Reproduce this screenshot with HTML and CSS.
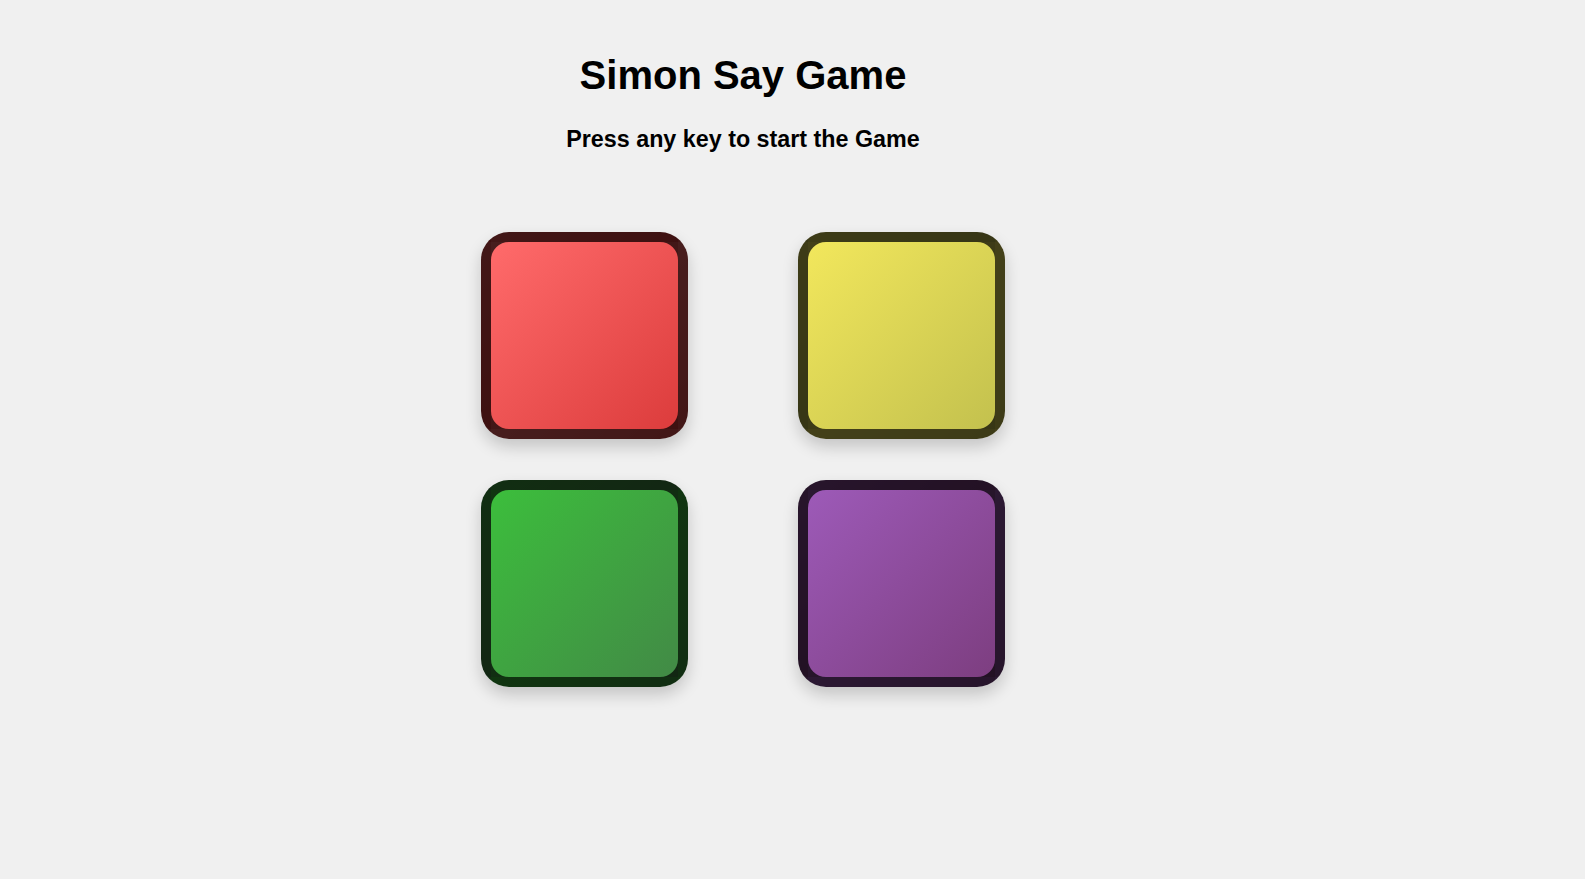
FILE: index.html
```html
<!DOCTYPE html>
<html lang="en">
<head>
<meta charset="UTF-8">
<title>Simon Say Game</title>
<link rel="stylesheet" href="styles.css">
</head>
<body>
<main class="game">
  <h1 class="title">Simon Say Game</h1>
  <h2 class="status">Press any key to start the Game</h2>
  <div class="board">
    <div class="btn red"></div>
    <div class="btn yellow"></div>
    <div class="btn green"></div>
    <div class="btn purple"></div>
  </div>
</main>
</body>
</html>
```
FILE: styles.css
```css
html, body {
  margin: 0;
  padding: 0;
}
body {
  background: #f0f0f0;
  color: #000;
  font-family: "Liberation Sans", Arial, sans-serif;
  padding-right: 99px;
}
.game {
  display: flex;
  flex-direction: column;
  align-items: center;
  padding-top: 52px;
  padding-bottom: 40px;
}
.title {
  margin: 0;
  font-size: 40px;
  line-height: 46px;
  font-weight: 700;
}
.status {
  margin: 28px 0 0;
  font-size: 23.3px;
  line-height: 27px;
  font-weight: 700;
}
.board {
  margin-top: 79px;
  display: grid;
  grid-template-columns: 207px 207px;
  grid-auto-rows: 207px;
  column-gap: 110px;
  row-gap: 41px;
}
.btn {
  box-sizing: border-box;
  border: 10px solid rgba(0, 0, 0, 0.72);
  border-radius: 28px;
  box-shadow: 0 8px 16px rgba(0, 0, 0, 0.18);
}
.red {
  background: linear-gradient(135deg, #ff6b6b, #dc3c3c);
}
.yellow {
  background: linear-gradient(135deg, #f2e75c, #c3c14e);
}
.green {
  background: linear-gradient(135deg, #3cbe3c, #428a46);
}
.purple {
  background: linear-gradient(135deg, #9d5ab8, #7d3e80);
}
```
